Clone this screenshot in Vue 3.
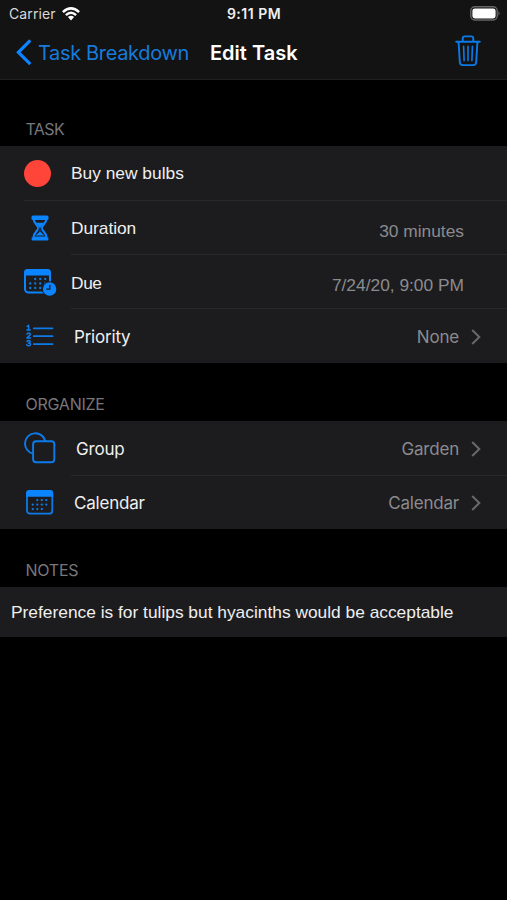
<script setup>
const taskRows = [
  { id: 'name', label: 'Buy new bulbs' },
  { id: 'duration', label: 'Duration', value: '30 minutes' },
  { id: 'due', label: 'Due', value: '7/24/20, 9:00 PM' },
  { id: 'priority', label: 'Priority', value: 'None', link: true },
]
const organizeRows = [
  { id: 'group', label: 'Group', value: 'Garden', link: true },
  { id: 'calendar', label: 'Calendar', value: 'Calendar', link: true },
]
const sections = [
  { id: 'task', title: 'TASK', rows: taskRows },
  { id: 'organize', title: 'ORGANIZE', rows: organizeRows },
]
const dots = [[13, 11], [18, 11], [23, 11], [8, 15.5], [13, 15.5], [18, 15.5], [23, 15.5], [8, 20], [13, 20], [18, 20]]
</script>

<template>
  <main class="screen">
    <header class="top">
      <div class="status">
        <div class="carrier">
          <span class="carrier-name">Carrier</span>
          <svg class="wifi" width="18" height="14" viewBox="0 0 18 14" fill="none" stroke="#fff" stroke-width="2.5">
            <path d="M.9 5.1Q9-2.3 17.1 5.1" />
            <path d="M3.9 8.1Q9 3.5 14.1 8.1" />
            <path d="M5.9 10.1Q9 7.5 12.1 10.1L9 13.4Z" fill="#fff" stroke="none" />
          </svg>
        </div>
        <span class="time">9:11 PM</span>
        <svg class="battery" width="31" height="15" viewBox="0 0 31 15">
          <rect x=".8" y=".8" width="26.4" height="13.2" rx="4" fill="none" stroke="#666668" stroke-width="1.4" />
          <rect x="2.4" y="2.4" width="23.2" height="10" rx="2.4" fill="#fff" />
          <path d="M28.5 5q2.3 2.4 0 4.8z" fill="#666668" />
        </svg>
      </div>
      <nav class="nav">
        <svg class="back-icon" width="16" height="27" viewBox="0 0 16 27" fill="none" stroke="#0a84ff" stroke-width="3.2">
          <path d="M14.3 1.4 2.4 13.3 14.3 25.2" />
        </svg>
        <span class="back">Task Breakdown</span>
        <h1 class="title">Edit Task</h1>
        <svg class="trash" width="26" height="32" viewBox="0 0 26 32" fill="none" stroke="#0c7be9" stroke-width="1.9" stroke-linecap="round" stroke-linejoin="round">
          <path d="M1.2 6.7h23.6M7.7 6.4V3.6q0-2.2 2.2-2.2h6.2q2.2 0 2.2 2.2v2.8" />
          <path d="M3.6 7l1.2 20.3q.2 2.8 3 2.8h10.4q2.8 0 3-2.8L22.4 7" />
          <path d="M8.6 11.2l.5 14.4M13 11.2v14.4M17.4 11.2l-.5 14.4" stroke-width="1.6" />
        </svg>
      </nav>
    </header>

    <section v-for="s in sections" :key="s.id" :class="['section', s.id]">
      <h2 class="heading"><span>{{ s.title }}</span></h2>
      <ul class="rows">
        <li v-for="r in s.rows" :key="r.id" :class="['row', r.id]">
          <div class="icon">
            <span v-if="r.id === 'name'" class="dot"></span>
            <svg v-else-if="r.id === 'duration'" width="18" height="26" viewBox="0 0 18 26">
              <path d="M2.600 4C2.600 8.500 7.300 10 7.300 13S2.600 17.500 2.600 22M15.400 4C15.400 8.500 10.700 10 10.700 13S15.400 17.500 15.400 22" fill="none" stroke="#0a84ff" stroke-width="2.100" />
              <path d="M2 .6h14q1.500 0 1.500 1.500v1.300q0 1.500-1.500 1.500H2Q.5 4.900.5 3.400V2.100Q.5.600 2 .600zM2 22.100h14q1.500 0 1.500 1.500v.4q0 1.500-1.500 1.500H2Q.5 25.500.5 24v-.4q0-1.500 1.500-1.500zM4.900 7.800h8.200L9.800 11.700V17l3.900 3.700V22H4.300v-1.300L8.200 17v-5.300z" fill="#0a84ff" />
              <path d="M6.300 18.300 8.300 16.500v-3.800M11.700 18.300 9.700 16.500v-3.800M4.600 5.600h8.800M4.200 21h9.600" fill="none" stroke="#1c1c1e" stroke-width="1" />
            </svg>
            <svg v-else-if="r.id === 'due'" width="33" height="27" viewBox="0 0 33 27">
              <rect x="1" y="1" width="25" height="22.600" rx="3.500" fill="none" stroke="#0a84ff" stroke-width="2" />
              <path d="M.1 6.500V3.500Q.1.100 3.600.100h19.800q3.500 0 3.500 3.400v3z" fill="#0a84ff" />
              <circle v-for="([x, y], i) in dots" :key="i" :cx="x - 1.800" :cy="y - 1" r="1.150" fill="#0c7be9" />
              <circle cx="25.600" cy="20" r="7.700" fill="#1c1c1e" />
              <circle cx="25.600" cy="20" r="6.700" fill="#0a84ff" />
              <path d="M25.800 15.800v4.400h-3.600" fill="none" stroke="#1c1c1e" stroke-width="1.300" />
            </svg>
            <svg v-else-if="r.id === 'priority'" width="28" height="24" viewBox="0 0 28 24" fill="none" stroke="#0c7be9" stroke-width="1.800" stroke-linecap="round" stroke-linejoin="round">
              <path d="M7.800 4.300h18.700M7.800 12.200h18.700M7.800 20.100h18.700" />
              <path d="M1.200 2.300 2.600 1.300v4.800M1 6.100h3.200M1 10.200q.3-1.300 1.700-1.300 1.600 0 1.600 1.300 0 .7-.9 1.400L1 13.900h3.500M1 17.300q.5-.9 1.700-.9 1.500 0 1.500 1.200T2.300 18.900q2.200 0 2.200 1.500 0 1.400-1.800 1.400-1.500 0-2-1.100" stroke-width="1.500" />
            </svg>
            <svg v-else-if="r.id === 'group'" width="32" height="32" viewBox="0 0 32 32" fill="none" stroke="#0c7be9" stroke-width="1.900">
              <path d="M9 21.600A10.300 10.300 0 1 1 21.300 8.900" />
              <rect x="9.100" y="9.300" width="21.200" height="21" rx="3" />
            </svg>
            <svg v-else width="28" height="25" viewBox="0 0 28 25">
              <rect x="1" y="1" width="25.300" height="22.700" rx="3" fill="none" stroke="#0c7be9" stroke-width="1.800" />
              <path d="M.1 6.700V3.300Q.1.100 3.300.100H24q3.200 0 3.200 3.200v3.400z" fill="#0a84ff" />
              <circle v-for="([x, y], i) in dots" :key="i" :cx="x * .9 - .4" :cy="y - .9" r="1.150" fill="#0c7be9" />
            </svg>
          </div>
          <span class="label">{{ r.label }}</span>
          <span v-if="r.value" class="value">{{ r.value }}</span>
          <svg v-if="r.link" class="chevron" width="10" height="16" viewBox="0 0 10 16" fill="none" stroke="#69696d" stroke-width="2">
            <path d="M1.200 1 8.300 8 1.200 15" />
          </svg>
        </li>
      </ul>
    </section>

    <section class="section notes">
      <h2 class="heading"><span>NOTES</span></h2>
      <p class="note"><span>Preference is for tulips but hyacinths would be acceptable</span></p>
    </section>
  </main>
</template>

<style>
body {
  background: #000;
}
</style>

<style scoped>
.screen {
  min-height: 900px;
  background: #000;
  color: #efeff0;
  font-family: Inter, "Liberation Sans", sans-serif;
  font-size: 17px;
  letter-spacing: -0.2px;
  white-space: nowrap;
}
h1, h2, p, ul {
  margin: 0;
  padding: 0;
  font-weight: 400;
}
svg {
  display: block;
  flex: none;
}
.top {
  box-sizing: border-box;
  height: 80px;
  background: #131313;
  border-bottom: 1px solid #202021;
}
.status {
  display: grid;
  grid-template-columns: 1fr auto 1fr;
  align-items: center;
  height: 26px;
  padding: 1px 6px 0 9px;
}
.carrier {
  display: flex;
  align-items: center;
  gap: 6px;
  letter-spacing: 0.1px;
}
.carrier-name {
  width: 47px;
  padding-bottom: 2px;
  font-size: 14px;
  color: #d9d9d9;
}
.wifi {
  margin-top: -1px;
}
.time {
  margin-right: 2px;
  padding-bottom: 2px;
  font-size: 14px;
  font-weight: 600;
  letter-spacing: 0.5px;
}
.battery {
  justify-self: end;
  margin-top: -1px;
}
.nav {
  display: flex;
  align-items: center;
  height: 50px;
  padding: 0 26px 0 16px;
}
.back {
  width: 172px;
  margin-left: 6px;
  padding-top: 2px;
  color: #167bdc;
  font-size: 20px;
  letter-spacing: -0.35px;
}
.title {
  padding-top: 2px;
  color: #fff;
  font-size: 20px;
  font-weight: 600;
  letter-spacing: 0;
}
.trash {
  margin-left: auto;
  margin-top: -3px;
}
.heading {
  box-sizing: border-box;
  display: flex;
  height: 58px;
  padding: 31px 25.5px 0;
  color: #77777a;
  font-size: 16px;
  letter-spacing: -0.25px;
  line-height: 20px;
}
.task .heading {
  height: 66px;
  padding-top: 39px;
  letter-spacing: -0.6px;
}
.rows {
  list-style: none;
}
.row {
  position: relative;
  display: flex;
  align-items: center;
  height: 54px;
  padding: 0 26px 0 24px;
  box-sizing: border-box;
  background: #1c1c1e;
}
.due,
.priority {
  padding-top: 3px;
}
.group,
.calendar {
  padding-top: 1px;
}
.task .rows {
  padding-bottom: 1px;
  background: #1c1c1e;
}
.row + .row::before {
  content: "";
  position: absolute;
  top: 0;
  left: 71px;
  right: 0;
  height: 1px;
  background: #29292b;
}
.row.duration::before {
  left: 24px;
}
.icon {
  display: flex;
  width: 47px;
}
.dot {
  width: 27px;
  height: 27px;
  border-radius: 50%;
  background: #ff453a;
}
.duration .icon {
  width: 40px;
  padding-left: 7px;
  padding-top: 1px;
}
.priority .icon {
  width: 48px;
  padding-left: 2px;
  padding-bottom: 1px;
}
.calendar .icon {
  width: 48px;
  padding-left: 2px;
}
.group .icon {
  width: 52px;
  padding-bottom: 2px;
}
.label {
  line-height: 22px;
}
.value {
  margin-left: auto;
  color: #8b8b8f;
  line-height: 22px;
}
.group .label,
.group .value,
.calendar .label,
.calendar .value {
  padding-top: 1px;
}
.name .label,
.duration .label,
.due .label,
.duration .value,
.due .value,
.note {
  font-family: "Liberation Sans", Arial, sans-serif;
  font-size: 17.35px;
  letter-spacing: 0;
}
.duration .label {
  padding-top: 1px;
  letter-spacing: -0.05px;
}
.due .label {
  letter-spacing: -0.4px;
}
.duration .value,
.due .value {
  margin-right: 17px;
}
.duration .value {
  padding-top: 8px;
}
.due .value {
  padding-top: 5px;
}
.chevron {
  margin-left: 12px;
}
.note {
  box-sizing: border-box;
  height: 50px;
  padding: 15px 11px;
  background: #1c1c1e;
  line-height: 20px;
}
</style>
